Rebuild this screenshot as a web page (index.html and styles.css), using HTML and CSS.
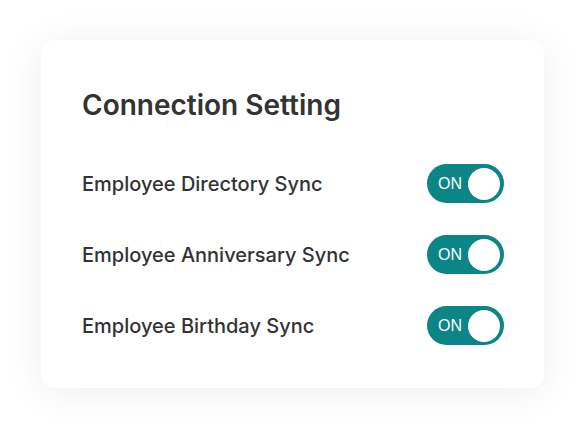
FILE: index.html
```html
<!DOCTYPE html>
<html lang="en">

<head>
    <meta charset="UTF-8">
    <meta name="viewport" content="width=device-width, initial-scale=1.0">
    <title>Connection Setting</title>
    <link rel="stylesheet" href="styles.css">
</head>

<body>

    <div class="card">
        <h3>Connection Setting</h3>

        <div class="setting-row">
            <span class="label">Employee Directory Sync</span>
            <button class="toggle">ON<span class="knob"></span></button>
        </div>

        <div class="setting-row">
            <span class="label">Employee Anniversary Sync</span>
            <button class="toggle">ON<span class="knob"></span></button>
        </div>

        <div class="setting-row">
            <span class="label">Employee Birthday Sync</span>
            <button class="toggle">ON<span class="knob"></span></button>
        </div>
    </div>

</body>

</html>
```

FILE: styles.css
```css
* {
    box-sizing: border-box;
}

body {
    font-family: 'Inter', 'Lato', sans-serif;
    margin: 0;
    padding: 40px 40px 40px 41px;
    background-color: #fff;
    color: #333;
}

.card {
    width: 503px;
    height: 348px;
    background-color: #fff;
    border-radius: 14px;
    box-shadow: 0 4px 40px rgba(0, 0, 0, 0.07);
    padding: 47px 40px 0 41px;
}

h3 {
    margin: 0 0 25px;
    font-size: 28px;
    font-weight: 600;
    line-height: 36px;
}

.setting-row {
    display: flex;
    justify-content: space-between;
    align-items: center;
    height: 71px;
}

.label {
    font-size: 20px;
    font-weight: 500;
    color: #333;
}

.toggle {
    display: flex;
    align-items: center;
    justify-content: space-between;
    width: 77px;
    height: 39px;
    padding: 0 4px 0 11px;
    border: 0;
    border-radius: 20px;
    background-color: #0b8585;
    color: #fff;
    font-family: 'Liberation Sans', sans-serif;
    font-size: 16px;
    cursor: pointer;
}

.knob {
    width: 32px;
    height: 32px;
    border-radius: 50%;
    background-color: #fff;
}
```
